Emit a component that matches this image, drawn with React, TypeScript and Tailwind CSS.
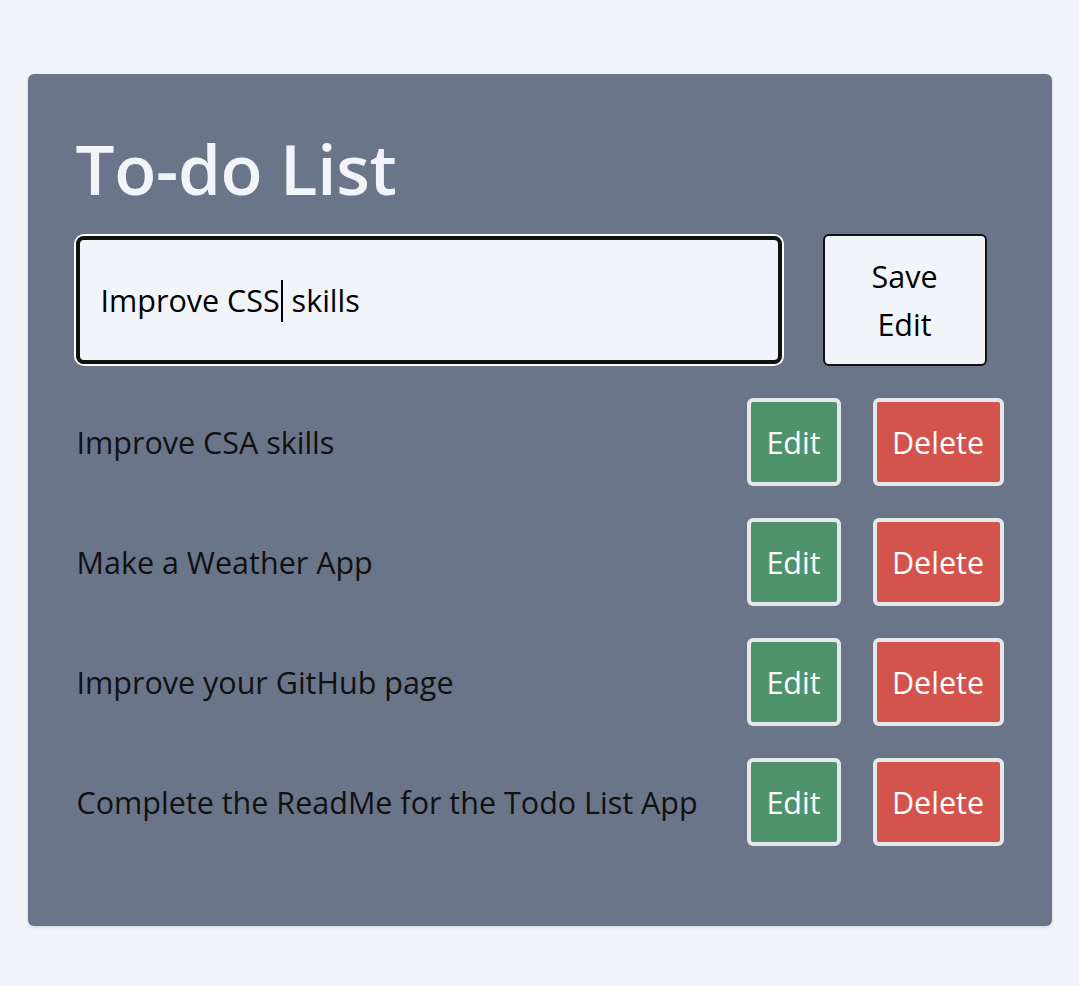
import React from "react";

const todos = [
  "Improve CSA skills",
  "Make a Weather App",
  "Improve your GitHub page",
  "Complete the ReadMe for the Todo List App",
];

export default function App() {
  return (
    <div
      className="min-h-[986px] w-full bg-[#f1f5f9] pt-[74px]"
      style={{ fontFamily: '"Open Sans", "Noto Sans", sans-serif' }}
    >
      <div className="mx-auto w-[1024px] rounded-md bg-[#6b7589] px-12 pb-[80px] pt-[52px] shadow-[0_1px_3px_rgba(0,0,0,0.15)]">
        <h1 className="text-[69px] font-semibold leading-[84px] tracking-[-0.3px] text-[#f1f5f9]">
          To-do List
        </h1>
        <div className="mt-[24px] -ml-[2px] flex items-center gap-[39px]">
          <div className="flex h-[132px] w-[710px] items-center rounded-[10px] border-2 border-white">
            <div className="flex h-full w-full items-center rounded-[8px] border-4 border-[#111111] bg-[#f1f5f9] pl-[21px] pt-[2px] text-[30.5px] text-black">
              <span>Improve CSS</span>
              <span className="mx-[1px] inline-block h-[42px] w-[2px] bg-black" />
              <span>&nbsp;skills</span>
            </div>
          </div>
          <button className="flex h-[132px] w-[164px] flex-col items-center justify-center rounded-[6px] border-2 border-[#111111] bg-[#f1f5f9] text-[30.5px] leading-[48px] text-black">
            <span>Save</span>
            <span>Edit</span>
          </button>
        </div>
        <ul className="mt-[32px] flex flex-col gap-[32px]">
          {todos.map((t) => (
            <li key={t} className="flex h-[88px] items-center">
              <span className="flex-1 pl-[1px] pt-[2px] text-[30.5px] text-[#111111]">{t}</span>
              <div className="flex items-center gap-[32px]">
                <button className="flex h-[88px] w-[94px] items-center justify-center rounded-[6px] border-4 border-[#e5e7eb] bg-[#4f936c] pt-[2px] text-[30.5px] text-white">
                  Edit
                </button>
                <button className="flex h-[88px] w-[131px] items-center justify-center rounded-[6px] border-4 border-[#e5e7eb] bg-[#d3544d] pt-[2px] text-[30.5px] text-white">
                  Delete
                </button>
              </div>
            </li>
          ))}
        </ul>
      </div>
    </div>
  );
}
